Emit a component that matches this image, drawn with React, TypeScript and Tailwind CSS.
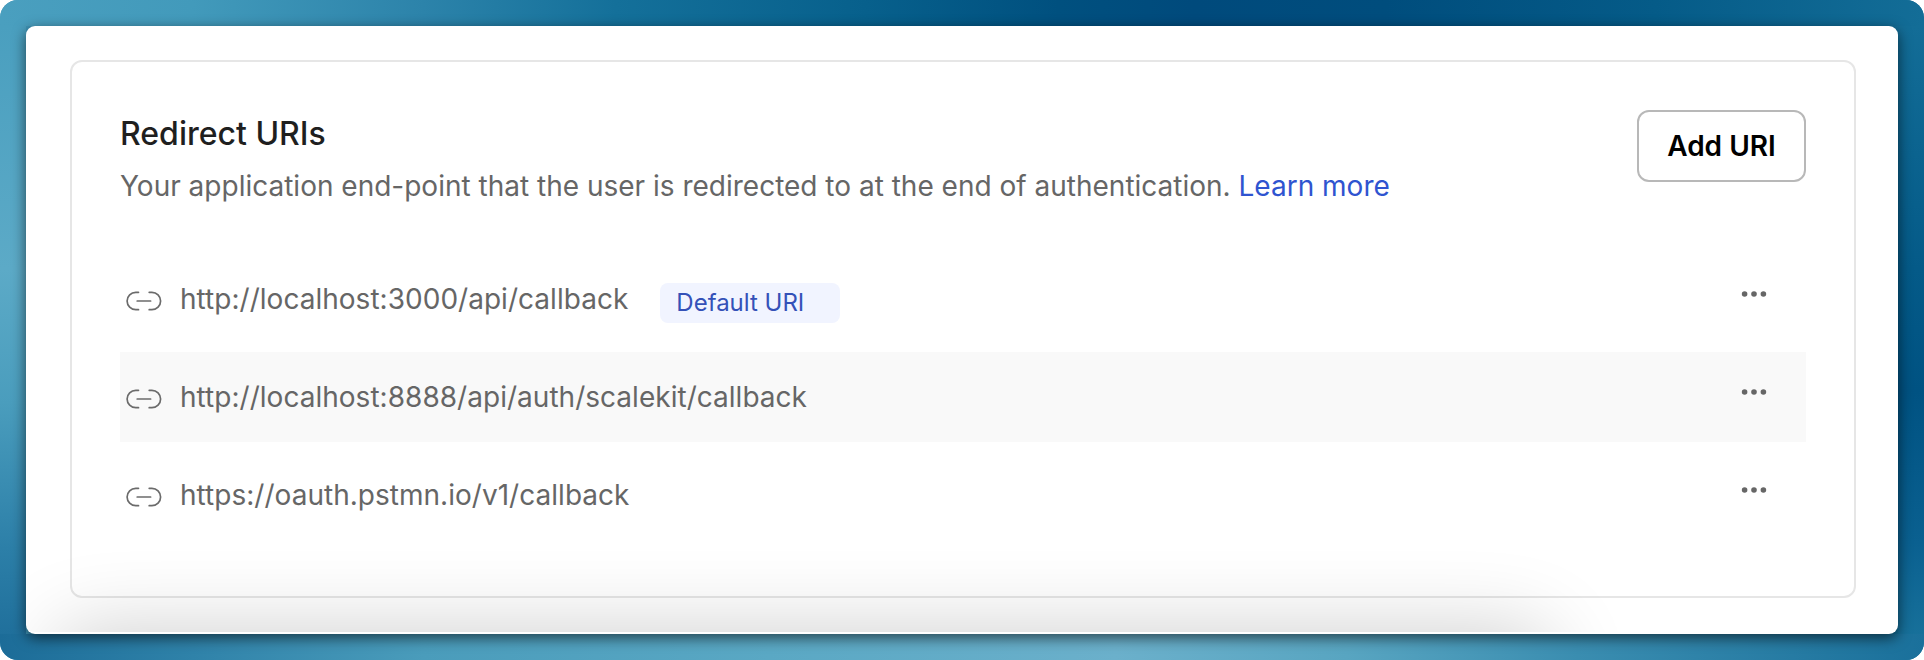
const uris = [
  { uri: "http://localhost:3000/api/callback", isDefault: true, active: false },
  { uri: "http://localhost:8888/api/auth/scalekit/callback", isDefault: false, active: true },
  { uri: "https://oauth.pstmn.io/v1/callback", isDefault: false, active: false },
];

function LinkIcon() {
  return (
    <svg className="mt-[37px] ml-[6px] h-[20px] w-[36px] shrink-0" viewBox="0 0 36 20" fill="none" stroke="#6b6b6b" strokeWidth="1.7" strokeLinecap="round">
      <path d="M12.5 1.3H9.8a8.7 8.7 0 0 0 0 17.4h2.7" />
      <path d="M23.2 1.3h2.7a8.7 8.7 0 0 1 0 17.4h-2.7" />
      <path d="M11.2 10h13.4" />
    </svg>
  );
}

function DotsIcon() {
  return (
    <svg className="mt-[37px] mr-[39px] ml-auto h-[6px] w-[26px] shrink-0" viewBox="0 0 26 6" fill="#666666">
      <circle cx="3.6" cy="3" r="2.8" />
      <circle cx="13" cy="3" r="2.8" />
      <circle cx="22.4" cy="3" r="2.8" />
    </svg>
  );
}

export default function App() {
  return (
    <div className="flex h-[660px] w-[1924px] flex-col overflow-hidden rounded-[18px] bg-[linear-gradient(90deg,#3f95b8,#136d97)] font-['Inter',sans-serif]">
      <div className="h-[26px] shrink-0 bg-[linear-gradient(90deg,#4a9fbf_0%,#429abb_10%,#2c83aa_22%,#14709a_32%,#07608c_45%,#00507f_55%,#004a7c_62%,#004d7d_72%,#055b88_86%,#136d97_100%)]" />
      <div className="flex h-[608px]">
        <div className="w-[26px] shrink-0 bg-[linear-gradient(180deg,#4a9fbf_0%,#5caac7_40%,#4a9dbd_62%,#2c7fa8_86%,#20709c_100%)]" />
        <main className="relative z-10 flex-1 rounded-[9px] bg-white pt-[34px] pr-[42px] pl-[44px] shadow-[0_4px_14px_rgba(0,0,0,0.6)]">
          <section className="h-[538px] rounded-[12px] border-2 border-[#e6e6e6] px-12 pt-12">
            <header className="flex h-[144px] items-start justify-between">
              <div className="text-[28px] whitespace-nowrap">
                <h1 className="mt-[4px] text-[32px] leading-[40px] font-medium text-[#1f1f1f]">Redirect URIs</h1>
                <p className="mt-[8px] leading-[48px] text-[#666666]">
                  Your application end-point that the user is redirected to at the end of authentication.{" "}
                  <a className="text-[#2f54d0]">Learn more</a>
                </p>
              </div>
              <button className="h-[72px] w-[169px] rounded-[12px] border-2 border-[#b8b8b8] text-[28px] font-semibold text-black">Add URI</button>
            </header>
            <ul className="flex flex-col gap-2">
              {uris.map((row) => (
                <li key={row.uri} className={row.active ? "flex h-[90px] items-start bg-[#f9f9f9]" : "flex h-[90px] items-start"}>
                  <LinkIcon />
                  <span className="mt-[25px] ml-[18px] text-[28px] leading-[40px] tracking-[0.025px] whitespace-nowrap text-[#666666]">{row.uri}</span>
                  {row.isDefault && (
                    <span className="mt-[29px] ml-[32px] h-[40px] w-[180px] rounded-[8px] bg-[#f1f4ff] pl-4 text-[24px] leading-[39px] text-[#3451b8]">Default URI</span>
                  )}
                  <DotsIcon />
                </li>
              ))}
            </ul>
          </section>
          <div className="pointer-events-none absolute inset-x-0 bottom-[2px] h-[110px] overflow-hidden rounded-b-[8px]">
            <div className="mt-[110px] ml-[32px] h-[100px] w-[1490px] rounded-[20px] shadow-[0_0_84px_rgba(0,0,0,0.2)]" />
          </div>
        </main>
        <div className="w-[26px] shrink-0 bg-[linear-gradient(180deg,#136d97_0%,#045a88_40%,#005282_60%,#0a6090_85%,#17709a_100%)]" />
      </div>
      <div className="h-[26px] shrink-0 bg-[linear-gradient(90deg,#1c6c98_0%,#2f82a9_10%,#4a9cbb_22%,#5aa8c4_40%,#6bb0cb_58%,#58a5c1_70%,#3a8db0_82%,#1a709b_100%)]" />
    </div>
  );
}
